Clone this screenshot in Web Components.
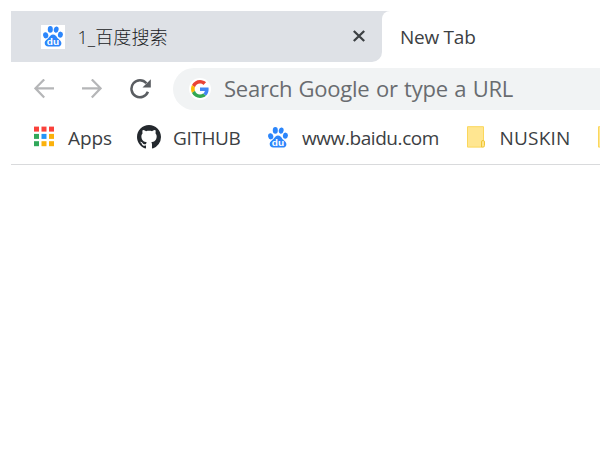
<!DOCTYPE html>
<html lang="en"><head><meta charset="utf-8"><title>New Tab</title>
<style>html,body{margin:0;background:#fff;overflow:hidden}</style></head>
<body><browser-window></browser-window>
<script>
const define=(name,html,ready)=>customElements.define(name,class extends HTMLElement{
  connectedCallback(){
    if(this.shadowRoot)return;
    this.attachShadow({mode:'open'}).innerHTML=html;
    if(ready)ready.call(this,this.shadowRoot);
  }
});
const svg=(w,h,vb,body)=>`<style>:host{display:block;flex:none;width:${w}px;height:${h}px}svg{display:block}</style><svg width="${w}" height="${h}" viewBox="${vb}">${body}</svg>`;

// Single-line label whose tracking fills the width given in its attribute
define('fit-label',`<style>:host{display:block;flex:none;white-space:nowrap}span{display:inline-block}</style><span><slot></slot></span>`,function(root){
  const w=+this.getAttribute('width'),s=root.querySelector('span');
  this.style.width=w+'px';
  s.style.letterSpacing=(w-s.getBoundingClientRect().width)/this.textContent.length+'px';
});
define('paw-icon',svg(20,21,'0 0 20 21',`<g fill="#2c86fb"><ellipse cx="2.7" cy="9.3" rx="2.6" ry="3.1" transform="rotate(-12 2.7 9.3)"/><ellipse cx="7.3" cy="3.4" rx="2.5" ry="3.3"/><ellipse cx="13.2" cy="3.6" rx="2.4" ry="3.2" transform="rotate(12 13.2 3.6)"/><ellipse cx="17.4" cy="8.7" rx="2.5" ry="3.1" transform="rotate(8 17.4 8.7)"/><path d="M10 8.4c2.2 0 3.1 1.4 4.1 3 1.3 1.8 4.3 3 4.3 5.8 0 2.1-1.5 3.4-3.6 3.4-1.7 0-2.9-.1-4.7-.1s-2.9.1-4.8.1c-2.1 0-3.6-1.2-3.6-3.5 0-2.7 2.7-3.6 4.1-5.6 1.2-1.7 2.2-3.1 4.2-3.1z"/></g><text x="3.8" y="18.6" textLength="12.4" lengthAdjust="spacingAndGlyphs" font-family="Liberation Sans, sans-serif" font-weight="bold" font-size="9.2" fill="#fff">du</text>`));
define('close-icon',svg(12,12,'0 0 12 12','<path d="M.8 1l10.4 10M11.2 1L.8 11" stroke="#3c4043" stroke-width="2.3"/>'));
define('back-icon',svg(20,20,'0 0 20 20','<path d="M10.2.4L1.4 9.3l8.8 9.1M1.4 9.3H20" fill="none" stroke="#b5b6b8" stroke-width="2.2"/>'));
define('forward-icon',svg(20,20,'0 0 20 20','<path d="M9.8.4l8.8 8.9-8.8 9.1M18.6 9.3H0" fill="none" stroke="#b5b6b8" stroke-width="2.2"/>'));
define('reload-icon',svg(22,20,'0 0 22 20','<path d="M16.4 4.2A8.5 8.5 0 1 0 17.9 12.8" fill="none" stroke="#5a5d61" stroke-width="2.5"/><path d="M20.8 .2v8.3h-8.3z" fill="#5a5d61"/>'));
define('google-icon',svg(18,18,'0 0 48 48','<path fill="#EA4335" d="M24 9.5c3.54 0 6.71 1.22 9.21 3.6l6.85-6.85C35.9 2.38 30.47 0 24 0 14.62 0 6.51 5.38 2.56 13.22l7.98 6.19C12.43 13.72 17.74 9.5 24 9.5z"/><path fill="#4285F4" d="M46.98 24.55c0-1.57-.15-3.09-.38-4.55H24v9.02h12.94c-.58 2.96-2.26 5.48-4.78 7.18l7.73 6c4.51-4.18 7.09-10.36 7.09-17.65z"/><path fill="#FBBC05" d="M10.53 28.59A14.5 14.5 0 0 1 9.77 24c0-1.6.27-3.14.76-4.59l-7.98-6.19A23.9 23.9 0 0 0 0 24c0 3.88.92 7.54 2.56 10.78l7.97-6.19z"/><path fill="#34A853" d="M24 48c6.48 0 11.93-2.13 15.89-5.81l-7.73-6c-2.15 1.45-4.92 2.3-8.16 2.3-6.26 0-11.57-4.22-13.47-9.91l-7.98 6.19C6.51 42.62 14.62 48 24 48z"/>'));
define('apps-icon',svg(20,20,'0 0 20 20',[0,1,2,3,4,5,6,7,8].map(i=>`<rect x="${i%3*7.5}" y="${(i/3|0)*7.3-.4}" width="5" height="5" fill="${['#fa413b','#fa413b','#fa413b','#31a85a','#2494f8','#fbb10b','#31a85a','#fbb10b','#fbb10b'][i]}"/>`).join('')).replace('svg{','svg{overflow:visible;'));
define('github-icon',svg(24,24,'0 0 16 16','<path fill="#24292e" d="M8 0C3.58 0 0 3.58 0 8c0 3.54 2.29 6.53 5.47 7.59.4.07.55-.17.55-.38 0-.19-.01-.82-.01-1.49-2.01.37-2.53-.49-2.69-.94-.09-.23-.48-.94-.82-1.13-.28-.15-.68-.52-.01-.53.63-.01 1.08.58 1.23.82.72 1.21 1.87.87 2.33.66.07-.52.28-.87.51-1.07-1.78-.2-3.64-.89-3.64-3.95 0-.87.31-1.59.82-2.15-.08-.2-.36-1.02.08-2.12 0 0 .67-.21 2.2.82.64-.18 1.32-.27 2-.27s1.36.09 2 .27c1.53-1.04 2.2-.82 2.2-.82.44 1.1.16 1.92.08 2.12.51.56.82 1.27.82 2.15 0 3.07-1.87 3.75-3.65 3.95.29.25.54.73.54 1.48 0 1.07-.01 1.93-.01 2.2 0 .21.15.46.55.38A8.01 8.01 0 0 0 16 8c0-4.42-3.58-8-8-8z"/>'));
define('folder-icon',svg(18,22,'0 0 18 22','<path d="M.5.7h16v20.4H.5z" fill="#ffe691"/><path d="M16.5 14V.7H.5v20.4h14" fill="none" stroke="#fbd75c"/><path d="M14.5 21.1V16q0-1.6 1.5-1.6t1.5 1.6v3.6q0 1.5-1.5 1.5z" fill="#ffe58c" stroke="#efc637"/>'));

define('tab-strip',`<style>
:host{display:flex;height:51px;width:589px;font-size:18px;color:#3c4043}
.tab{box-sizing:border-box;flex:none;width:371px;display:flex;align-items:center;padding-left:30px;background:#dee1e6;border-radius:0 0 10px 0}
.fav{background:#fff;width:24px;height:24px;display:grid;place-items:center;margin-right:12.5px}
.title{font-weight:300;padding-bottom:1px;color:#202124}
.fill{flex:1}close-icon{margin-right:17px;margin-bottom:2px}
.slot{flex:none;width:8px;background:#fff;border-top-left-radius:9px}
.under{display:flex;flex:none;background:linear-gradient(#dee1e6 50%,#fff 50%)}
.active{flex:none;display:flex;align-items:center;padding-left:10px;font-size:19px}
</style><div class="under"><div class="tab"><div class="fav"><paw-icon></paw-icon></div><fit-label class="title" width="90">1_百度搜索</fit-label><div class="fill"></div><close-icon></close-icon></div><div class="slot"></div></div><div class="active"><fit-label width="75.5">New Tab</fit-label></div>`);
define('tool-bar',`<style>
:host{display:flex;align-items:center;height:54px;padding-left:23px}
forward-icon{margin-left:28px}reload-icon{margin-left:28px}
.box{flex:1;margin-left:21px;height:42px;border-radius:21px 0 0 21px;background:#f1f3f4;display:flex;align-items:center;padding-left:16px;color:#696c70;font-size:22px;word-spacing:1px}
.g{width:22px;height:22px;border-radius:50%;background:#fff;display:grid;place-items:center;margin-right:13px}
fit-label{padding-bottom:2px}
</style><back-icon></back-icon><forward-icon></forward-icon><reload-icon></reload-icon><div class="box"><div class="g"><google-icon></google-icon></div><fit-label width="289">Search Google or type a URL</fit-label></div>`);
define('book-mark',`<style>:host{display:flex;align-items:center;flex:none}</style><slot name="icon"></slot><slot></slot>`);
define('bookmark-bar',`<style>
:host{display:flex;box-sizing:border-box;height:49px;padding-bottom:6px;border-bottom:1px solid #d9dadc;padding-left:23px;font-size:19px;color:#3c4043;overflow:hidden}
fit-label{margin-left:var(--gap);padding-top:1px}
</style>
<book-mark style="--gap:14px;width:103px"><apps-icon slot="icon"></apps-icon><fit-label width="44">Apps</fit-label></book-mark>
<book-mark style="--gap:12px;width:131px"><github-icon slot="icon"></github-icon><fit-label width="67.5">GITHUB</fit-label></book-mark>
<book-mark style="--gap:14px;width:199px"><paw-icon slot="icon"></paw-icon><fit-label width="137">www.baidu.com</fit-label></book-mark>
<book-mark style="--gap:14.5px;width:131px"><folder-icon slot="icon"></folder-icon><fit-label width="71">NUSKIN</fit-label></book-mark>
<book-mark><folder-icon slot="icon"></folder-icon></book-mark>`);
define('browser-window',`<style>
:host{display:block;box-sizing:border-box;width:600px;height:472px;padding:11px 0 0 11px;background:#fff;overflow:hidden;font-family:"Open Sans","Noto Sans CJK SC",sans-serif}
</style><tab-strip></tab-strip><tool-bar></tool-bar><bookmark-bar></bookmark-bar>`);
</script></body></html>
